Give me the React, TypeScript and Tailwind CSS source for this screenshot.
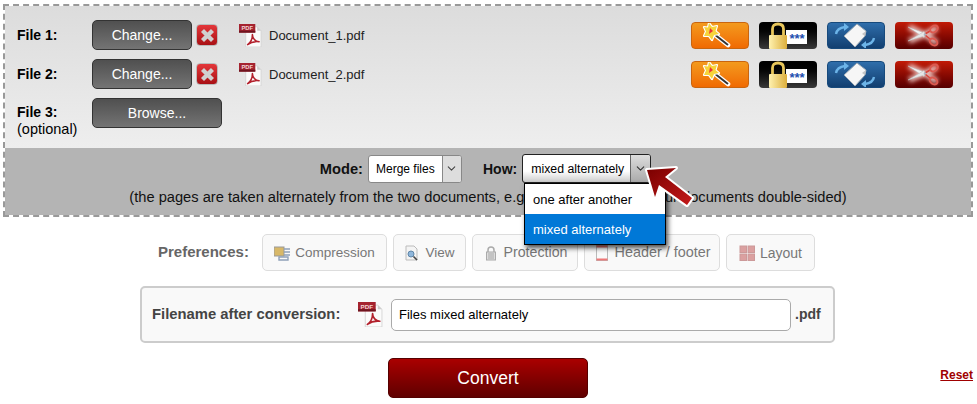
import type { ReactNode } from 'react';
import { ChevronDown } from 'lucide-react';

function PdfIcon({ className }: { className: string }) {
  return (
    <svg viewBox="0 0 24 24" className={className}>
      <path d="M7 3H19L23 7V24H7Z" fill="#fbfbfb" stroke="#d0d0d0" strokeWidth="0.8" />
      <path d="M19 3L23 7H19Z" fill="#ccc" />
      <rect x="0" y="0" width="17" height="9" fill="#a5232f" />
      <rect x="0" y="7" width="17" height="2" fill="#6f1520" />
      <text x="8.5" y="6.6" textAnchor="middle" fontSize="6" fontWeight="700" fill="#f3d5d5" fontFamily="Liberation Sans, sans-serif">PDF</text>
      <path d="M9 21.5C12 19.5 14 15 14 11C14 15 17 18.5 21 18.5C17 18 12.5 19 9 21.5Z" fill="none" stroke="#b3202c" strokeWidth="1.6" strokeLinejoin="round" />
    </svg>
  );
}

function DeleteIcon() {
  return (
    <span className="flex h-[22px] w-[22px] items-center justify-center rounded-[4px] border border-[#bbb] bg-gradient-to-b from-[#e4363a] to-[#a90f14]">
      <svg viewBox="0 0 12 12" className="h-[15px] w-[15px]">
        <path d="M2 2L10 10M10 2L2 10" stroke="#d0d0d0" strokeWidth="3.4" />
      </svg>
    </span>
  );
}

function ActionButtons() {
  return (
    <div className="ml-auto flex gap-[10px] pr-[18px]">
      {/* wand */}
      <span className="h-[27px] w-[58px] rounded-[4px] border border-[#c9650f] bg-gradient-to-b from-[#f39a1d] to-[#f06a02]">
        <svg viewBox="0 0 56 25" className="h-[25px] w-[56px]">
          <path d="M22 11L36 22" stroke="#fff" strokeWidth="4.6" strokeLinecap="round" />
          <path d="M22 11L36 22" stroke="#333" strokeWidth="2" />
          <path d="M17 0L20 4L25 3L23.5 8L27 11L22 12L20 17L17 13L12 13L14 8.5L12 4L16 4.5Z" fill="#f7d43a" stroke="#fff" strokeWidth="2.2" strokeLinejoin="round" paintOrder="stroke" />
          <path d="M18 5L21 8L17 11Z" fill="#e33" />
        </svg>
      </span>
      {/* password lock */}
      <span className="h-[27px] w-[58px] overflow-hidden rounded-[4px] bg-gradient-to-b from-[#000] to-[#3a3a3a]">
        <svg viewBox="0 0 58 27" className="h-[27px] w-[58px]">
          <defs>
            <linearGradient id="lockGold" x1="0" y1="0" x2="1" y2="0">
              <stop offset="0" stopColor="#fff2b0" />
              <stop offset="1" stopColor="#dcae3c" />
            </linearGradient>
          </defs>
          <rect x="27" y="8" width="21" height="14" fill="#fff" />
          <path d="M13.5 14V7Q13.5 2 19 2Q24.5 2 24.5 7V14" fill="none" stroke="#e8c65a" strokeWidth="2.8" />
          <rect x="10" y="13" width="18" height="14" rx="1" fill="url(#lockGold)" />
          <text x="38" y="21" textAnchor="middle" fontSize="13" fontWeight="700" fill="#1d4fb0" fontFamily="Liberation Sans, sans-serif">***</text>
        </svg>
      </span>
      {/* rotate */}
      <span className="h-[27px] w-[58px] rounded-[4px] border border-[#174a7c] bg-gradient-to-b from-[#2f6eab] to-[#123f70]">
        <svg viewBox="0 0 56 25" className="h-[25px] w-[56px]">
          <path d="M8 11Q9 5 17 4" fill="none" stroke="#6cb4e8" strokeWidth="2.4" />
          <path d="M16 0L21 4L16 8Z" fill="#6cb4e8" />
          <path d="M46 15Q45 21 37 22" fill="none" stroke="#6cb4e8" strokeWidth="2.4" />
          <path d="M38 18L33 22L38 26Z" fill="#6cb4e8" />
          <path d="M16 13L29 1L38 8L37 13L27 24Z" fill="#f6f6f6" stroke="#9aa8b4" strokeWidth="1" />
          <path d="M38 8L34 11L37 13Z" fill="#c4c4c4" />
        </svg>
      </span>
      {/* scissors */}
      <span className="h-[27px] w-[58px] rounded-[4px] bg-gradient-to-b from-[#c21a06] to-[#560000]">
        <svg viewBox="0 0 58 27" className="h-[27px] w-[58px]">
          <defs>
            <filter id="cutGlow" x="-30%" y="-50%" width="160%" height="200%">
              <feGaussianBlur stdDeviation="2" />
            </filter>
          </defs>
          <path d="M14 5L31 13L42 21M14 19L31 12L42 6" fill="none" stroke="#f4d4d0" strokeWidth="6" opacity="0.85" filter="url(#cutGlow)" />
          <path d="M13 5L31 11.5L29 15.5Z" fill="#f2f2f2" stroke="#bbb" strokeWidth="0.5" />
          <path d="M13 19L31 13.5L29 9.5Z" fill="#e6e6e6" stroke="#bbb" strokeWidth="0.5" />
          <path d="M30 13L35 17M30 12L35 9" stroke="#d8443a" strokeWidth="1.6" />
          <ellipse cx="39" cy="7" rx="4.2" ry="3" fill="none" stroke="#dd5a50" strokeWidth="2" transform="rotate(-35 39 7)" />
          <ellipse cx="38.5" cy="20" rx="4.2" ry="3" fill="none" stroke="#dd5a50" strokeWidth="2" transform="rotate(35 38.5 20)" />
          <circle cx="30" cy="12.5" r="1.2" fill="#a9b6c4" />
        </svg>
      </span>
    </div>
  );
}

function FileRow({ label, name }: { label: string; name: string }) {
  return (
    <div className="flex h-[30px] items-center">
      <b className="w-[75px] text-[14px] text-black">{label}</b>
      <button className="h-[30px] w-[100px] rounded-[5px] border border-[#333] bg-gradient-to-b from-[#505050] to-[#747474] text-[14px] text-white">Change...</button>
      <span className="ml-[4px]"><DeleteIcon /></span>
      <PdfIcon className="ml-[21px] h-[23px] w-[23px]" />
      <span className="ml-[7px] pt-[2px] text-[13px] text-[#222]">{name}</span>
      <ActionButtons />
    </div>
  );
}

function PrefButton({ icon, label, size }: { icon: ReactNode; label: string; size: string }) {
  return (
    <span className={`flex h-[37px] items-center justify-center gap-[5px] rounded-[5px] border border-[#ddd] bg-[#f9f9f9] pt-[1px] text-[#777] ${size}`}>
      {icon}
      {label}
    </span>
  );
}

export default function App() {
  return (
    <div className="relative h-[404px] w-[977px] overflow-hidden bg-white font-['Liberation_Sans',Arial,sans-serif]">
      {/* Files panel */}
      <div className="mx-[3px] mt-[4px] h-[213px] w-[970px] border-2 border-dashed border-[#999]">
        <div className="flex h-[142px] flex-col gap-[9px] bg-gradient-to-b from-[#dcdcdc] to-[#eeeeee] pl-[12px] pt-[14px]">
          <FileRow label="File 1:" name="Document_1.pdf" />
          <FileRow label="File 2:" name="Document_2.pdf" />
          <div className="flex items-start">
            <div className="w-[75px] pt-[6px] text-[14.5px] leading-[17px] text-black">
              <b className="text-[14px]">File 3:</b>
              <br />
              (optional)
            </div>
            <button className="h-[30px] w-[130px] rounded-[5px] border border-[#333] bg-gradient-to-b from-[#505050] to-[#747474] text-[14px] text-white">Browse...</button>
          </div>
        </div>
        <div className="h-[67px] bg-[#b4b4b4] pt-[6px]">
          <div className="flex items-center justify-center pr-[5px]">
            <b className="pt-[1px] text-[14.67px] text-[#111]">Mode:</b>
            <span className="ml-[5px] flex h-[28px] w-[94px] items-center overflow-hidden rounded-[3px] border border-[#888] bg-white">
              <span className="flex-1 pl-[7px] pt-[1px] text-[12px] text-black">Merge files</span>
              <span className="flex h-full w-[19px] items-center justify-center border-l border-[#888] bg-[#ddd]">
                <ChevronDown className="h-[13px] w-[13px] text-[#444]" />
              </span>
            </span>
            <b className="ml-[21px] pt-[1px] text-[14px] text-[#111]">How:</b>
            <span className="ml-[5px] flex h-[29px] w-[129px] items-center overflow-hidden rounded-[3px] border border-[#222] bg-gradient-to-b from-white from-60% to-[#ccc]">
              <span className="flex-1 pl-[8px] pt-[2px] text-[12.3px] text-black">mixed alternately</span>
              <span className="flex h-full w-[20px] items-center justify-center border-l border-[#666] bg-gradient-to-b from-[#ddd] to-[#aaa]">
                <ChevronDown className="h-[13px] w-[13px] text-[#333]" />
              </span>
            </span>
          </div>
          <p className="mt-[4px] text-center text-[14.67px] leading-[20px] text-[#111]">
            (the pages are taken alternately from the two documents, e.g. if you've scanned your documents double-sided)
          </p>
        </div>
      </div>

      {/* Preferences */}
      <div className="mt-[17px] flex items-center pl-[158px]">
        <b className="w-[104px] text-[15px] text-[#666]">Preferences:</b>
        <div className="flex gap-[6px]">
          <PrefButton
            label="Compression"
            size="w-[125px] text-[13.5px]"
            icon={
              <svg viewBox="0 0 16 16" className="h-[16px] w-[16px]">
                <rect x="0" y="2" width="10" height="9" fill="#d8b868" stroke="#999" />
                <path d="M10 4H16M10 7H16M10 10H16M5 12H14V15H5Z" stroke="#8fa0b8" strokeWidth="1.4" fill="none" />
              </svg>
            }
          />
          <PrefButton
            label="View"
            size="w-[73px] text-[13.5px]"
            icon={
              <svg viewBox="0 0 16 16" className="h-[16px] w-[16px]">
                <path d="M2 1H10L13 4V15H2Z" fill="#f4f4f4" stroke="#bbb" />
                <circle cx="7" cy="9" r="3" fill="#8fb7dc" stroke="#5f86a8" />
                <path d="M9.5 11.5L13 15" stroke="#444" strokeWidth="1.6" />
              </svg>
            }
          />
          <PrefButton
            label="Protection"
            size="w-[106px] text-[14.2px]"
            icon={
              <svg viewBox="0 0 16 16" className="h-[16px] w-[16px]">
                <path d="M5 8V5Q5 2 8 2Q11 2 11 5V8" fill="none" stroke="#aaa" strokeWidth="1.5" />
                <rect x="3.5" y="7" width="9" height="8" fill="#ddd" stroke="#aaa" />
                <path d="M6 8V14M8 8V14M10 8V14" stroke="#aaa" />
              </svg>
            }
          />
          <PrefButton
            label="Header / footer"
            size="w-[136px] text-[14.4px]"
            icon={
              <svg viewBox="0 0 16 16" className="h-[16px] w-[16px]">
                <rect x="2.5" y="0.5" width="11" height="15" fill="#fafafa" stroke="#bbb" />
                <rect x="2.5" y="0.5" width="11" height="2" fill="#e77" />
                <rect x="2.5" y="13.5" width="11" height="2" fill="#e77" />
              </svg>
            }
          />
          <PrefButton
            label="Layout"
            size="w-[89px] text-[14px]"
            icon={
              <svg viewBox="0 0 16 16" className="h-[16px] w-[16px]">
                <rect x="1" y="1" width="6.5" height="6.5" fill="#dba0a0" stroke="#c99" />
                <rect x="9" y="1" width="6.5" height="6.5" fill="#dba0a0" stroke="#c99" />
                <rect x="1" y="9" width="6.5" height="6.5" fill="#dba0a0" stroke="#c99" />
                <rect x="9" y="9" width="6.5" height="6.5" fill="#dba0a0" stroke="#c99" />
              </svg>
            }
          />
        </div>
      </div>

      {/* Filename */}
      <div className="ml-[140px] mt-[15px] flex h-[57px] w-[695px] items-center rounded-[5px] border-2 border-[#ccc] bg-[#f9f9f9] pl-[10px]">
        <b className="w-[206px] text-[14.8px] text-[#444]">Filename after conversion:</b>
        <PdfIcon className="h-[25px] w-[25px]" />
        <span className="ml-[8px] flex h-[32px] w-[400px] items-center rounded-[5px] border border-[#aaa] bg-white pl-[7px] text-[13px] text-black">Files mixed alternately</span>
        <b className="ml-[4px] text-[14px] text-[#444]">.pdf</b>
      </div>

      {/* Convert */}
      <div className="mt-[15px] grid grid-cols-[388px_200px_1fr] items-center">
        <span />
        <button className="h-[40px] rounded-[5px] border border-[#500] bg-gradient-to-b from-[#aa0000] to-[#600000] text-[17.5px] text-white">Convert</button>
        <a className="mb-[6px] justify-self-end pr-[4px] text-[12px] font-bold text-[#a00000] underline">Reset</a>
      </div>

      {/* Open dropdown */}
      <div className="absolute left-[524px] top-[183px] w-[142px] border border-black bg-white text-[13px] text-black shadow-[2px_3px_5px_rgba(0,0,0,0.7)]">
        <div className="flex h-[30px] items-center pl-[8px] pt-[1px]">one after another</div>
        <div className="flex h-[30px] items-center bg-[#0078d7] pl-[8px] pt-[1px] text-white">mixed alternately</div>
      </div>

      {/* Callout arrow */}
      <svg viewBox="0 0 60 50" className="absolute left-[640px] top-[160px] h-[50px] w-[60px]">
        <defs>
          <linearGradient id="arrowFill" x1="0" y1="0" x2="1" y2="1">
            <stop offset="0" stopColor="#7a0000" />
            <stop offset="1" stopColor="#c41a1a" />
          </linearGradient>
        </defs>
        <path
          d="M7 10L36 8L25 17L52 38L47 45L19 25L15 37Z"
          fill="url(#arrowFill)"
          stroke="#fff"
          strokeWidth="4"
          strokeLinejoin="round"
          paintOrder="stroke"
        />
      </svg>
    </div>
  );
}
